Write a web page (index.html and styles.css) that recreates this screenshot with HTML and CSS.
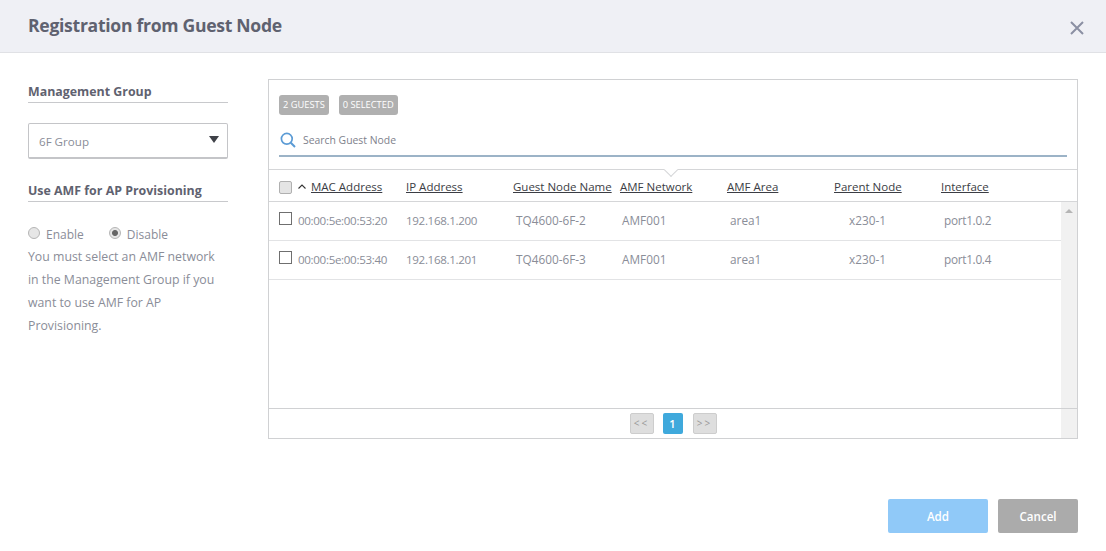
FILE: index.html
```html
<!DOCTYPE html>
<html lang="en">
<head>
    <meta charset="UTF-8">
    <title>Registration from Guest Node</title>
    <link rel="stylesheet" href="styles.css">
</head>
<body>

<div class="modal-header">
    <div class="modal-title">Registration from Guest Node</div>
    <svg class="close-icon" width="14" height="14" viewBox="0 0 14 14"><path d="M1 1L13 13M13 1L1 13" stroke="#8b90a3" stroke-width="2" fill="none"/></svg>
</div>

<div class="modal-body">
    <div class="side">
        <div class="side-heading">Management Group</div>
        <div class="select-box">
            <span>6F Group</span>
            <span class="select-arrow"></span>
        </div>
        <div class="side-heading side-heading-amf">Use AMF for AP Provisioning</div>
        <div class="radio-row">
            <span class="radio"></span><span class="radio-label">Enable</span>
            <span class="radio radio-on"></span><span class="radio-label">Disable</span>
        </div>
        <div class="side-note">You must select an AMF network in the Management Group if you want to use AMF for AP Provisioning.</div>
    </div>

    <div class="panel">
        <div class="panel-top">
            <div class="badges">
                <span class="badge">2 GUESTS</span>
                <span class="badge">0 SELECTED</span>
            </div>
            <div class="search">
                <svg width="16" height="16" viewBox="0 0 16 16"><circle cx="6.8" cy="6.8" r="5.4" stroke="#5b9bd5" stroke-width="1.7" fill="none"/><path d="M10.8 10.8L15 15" stroke="#5b9bd5" stroke-width="2" fill="none"/></svg>
                <span>Search Guest Node</span>
            </div>
        </div>

        <div class="table-head">
            <span class="notch"></span>
            <div class="cell-check"><span class="check check-all"></span></div>
            <div class="col-mac"><svg class="caret" width="8" height="5" viewBox="0 0 8 5"><path d="M0.5 4.5L4 1L7.5 4.5" stroke="#333" stroke-width="1.1" fill="none"/></svg><u>MAC Address</u></div>
            <div class="col"><u>IP Address</u></div>
            <div class="col"><u>Guest Node Name</u></div>
            <div class="col"><u>AMF Network</u></div>
            <div class="col"><u>AMF Area</u></div>
            <div class="col"><u>Parent Node</u></div>
            <div class="col"><u>Interface</u></div>
        </div>

        <div class="table-wrap">
            <div class="rows">
                <div class="row">
                    <div class="cell-check"><span class="check"></span></div>
                    <div class="cell-addr">00:00:5e:00:53:20</div>
                    <div class="cell-addr">192.168.1.200</div>
                    <div class="cell">TQ4600-6F-2</div>
                    <div class="cell">AMF001</div>
                    <div class="cell">area1</div>
                    <div class="cell cell-parent">x230-1</div>
                    <div class="cell cell-port">port1.0.2</div>
                </div>
                <div class="row">
                    <div class="cell-check"><span class="check"></span></div>
                    <div class="cell-addr">00:00:5e:00:53:40</div>
                    <div class="cell-addr">192.168.1.201</div>
                    <div class="cell">TQ4600-6F-3</div>
                    <div class="cell">AMF001</div>
                    <div class="cell">area1</div>
                    <div class="cell cell-parent">x230-1</div>
                    <div class="cell cell-port">port1.0.4</div>
                </div>
            </div>
            <div class="scroll-track"><span class="scroll-up"></span></div>
        </div>

        <div class="pager-wrap">
            <div class="pager">
                <span class="page-btn">&lt;&lt;</span>
                <span class="page-num">1</span>
                <span class="page-btn">&gt;&gt;</span>
            </div>
            <div class="scroll-track"></div>
        </div>
    </div>
</div>

<div class="modal-footer">
    <button class="btn btn-add">Add</button>
    <button class="btn btn-cancel">Cancel</button>
</div>

</body>
</html>
```

FILE: styles.css
```css
body {
    font-family: "Open Sans", Arial, sans-serif;
    background-color: #fff;
    margin: 0;
    padding: 0;
    color: #8a8d98;
    font-size: 12px;
}

.modal-header {
    height: 52px;
    background-color: #eff0f5;
    border-bottom: 1px solid #e0e1e5;
    display: flex;
    justify-content: space-between;
    align-items: center;
    padding: 0 22px 0 28px;
}

.modal-title {
    font-size: 17.6px;
    font-weight: 700;
    letter-spacing: -0.3px;
    color: #5f6270;
    position: relative;
    top: -1px;
}

.close-icon {
    position: relative;
    top: 2px;
}

.modal-body {
    display: flex;
    padding: 26px 28px 0 28px;
    gap: 40px;
}

/* Left column */
.side {
    width: 200px;
    flex-shrink: 0;
}

.side-heading {
    font-size: 12.4px;
    font-weight: 700;
    color: #5f6270;
    height: 23px;
    line-height: 26px;
    border-bottom: 1px solid #c8c9cc;
}

.side-heading-amf {
    margin-top: 19px;
}

.select-box {
    margin-top: 20px;
    height: 33px;
    box-sizing: content-box;
    border: 1px solid #c4c5c8;
    border-bottom: 2px solid #c4c5c8;
    border-radius: 2px;
    display: flex;
    justify-content: space-between;
    align-items: center;
    padding: 0 8px 0 10px;
    color: #8a8d98;
    font-size: 11.6px;
}

.select-box span:first-child {
    position: relative;
    top: 1px;
}

.select-arrow {
    width: 0;
    height: 0;
    border-left: 5.5px solid transparent;
    border-right: 5.5px solid transparent;
    border-top: 7px solid #3f4148;
    position: relative;
    top: -1px;
}

.radio-row {
    display: flex;
    align-items: center;
    margin-top: 22px;
    height: 21px;
}

.radio {
    width: 10px;
    height: 10px;
    border-radius: 50%;
    border: 1px solid #b5b5b5;
    background-color: #e6e6e6;
    position: relative;
    top: -2px;
}

.radio-on {
    background: radial-gradient(circle, #666 0, #666 2.5px, #e6e6e6 3.5px);
}

.radio-label {
    margin-left: 6px;
    margin-right: 25px;
}

.side-note {
    font-size: 12.3px;
    line-height: 23px;
}

/* Right panel */
.panel {
    width: 808px;
    height: 358px;
    border: 1px solid #d0d1d3;
    display: flex;
    flex-direction: column;
}

.panel-top {
    height: 90px;
    padding: 15px 10px 0 10px;
    box-sizing: border-box;
    border-bottom: 1px solid #d5d6d8;
}

.badges {
    display: flex;
    gap: 10px;
}

.badge {
    background-color: #b0b0b0;
    color: #fff;
    font-size: 9.3px;
    height: 20px;
    line-height: 20px;
    padding: 0 4px;
    border-radius: 3px;
}

.search {
    display: flex;
    align-items: center;
    gap: 7px;
    margin-top: 9px;
    height: 33px;
    box-sizing: border-box;
    padding: 0 0 0 1px;
    border-bottom: 2px solid #9cb3c7;
    font-size: 10.4px;
    color: #7e818c;
}

.table-head {
    display: grid;
    grid-template-columns: 29px 108px repeat(6, 107px) 1fr;
    height: 31px;
    box-sizing: content-box;
    align-items: center;
    border-bottom: 1px solid #d5d6d8;
    color: #3b3d44;
    font-size: 11.5px;
    position: relative;
}

.table-head .col,
.table-head .col-mac {
    position: relative;
    top: 1px;
}

.notch {
    position: absolute;
    left: 397px;
    top: -5px;
    width: 9px;
    height: 9px;
    background-color: #fff;
    border-right: 1px solid #d5d6d8;
    border-bottom: 1px solid #d5d6d8;
    transform: rotate(45deg);
}

.cell-check {
    padding-left: 10px;
    display: flex;
    align-items: center;
}

.col-mac {
    white-space: nowrap;
    display: flex;
    align-items: center;
    width: 137px;
}

.col-mac u {
    margin-left: 5px;
}

.col {
    white-space: nowrap;
}

.check {
    width: 11px;
    height: 11px;
    border: 1px solid #6f6f6f;
    display: block;
    background-color: #fff;
    position: relative;
    top: -2px;
}

.check-all {
    border: 1px solid #b0b0b0;
    background-color: #e4e4e4;
    border-radius: 2px;
    top: 2px;
}

.table-wrap {
    display: flex;
    flex: 1;
    min-height: 0;
}

.rows {
    flex: 1;
}

.row {
    display: grid;
    grid-template-columns: 29px 108px 110px 106px 108px 107px 107px 1fr;
    box-sizing: border-box;
    padding-bottom: 2px;
    height: 39px;
    align-items: center;
    border-bottom: 1px solid #e2e3e5;
}

.cell-addr, .cell {
    white-space: nowrap;
    font-size: 11.8px;
}

.cell-addr {
    font-size: 11.6px;
    letter-spacing: -0.33px;
}

.cell-parent {
    padding-left: 12px;
}

.cell-port {
    letter-spacing: -0.3px;
}

.scroll-track {
    width: 16px;
    flex-shrink: 0;
    background-color: #f1f1f1;
    position: relative;
}

.scroll-up {
    position: absolute;
    left: 4px;
    top: 7px;
    width: 0;
    height: 0;
    border-left: 4px solid transparent;
    border-right: 4px solid transparent;
    border-bottom: 4px solid #b5b5b5;
}

.pager-wrap {
    display: flex;
    height: 29px;
    border-top: 1px solid #d0d1d3;
}

.pager {
    flex: 1;
    display: flex;
    justify-content: center;
    align-items: center;
    gap: 9px;
    padding-left: 16px;
}

.page-btn {
    width: 22px;
    height: 19px;
    line-height: 19px;
    text-align: center;
    background-color: #dedede;
    border: 1px solid #cdcdcd;
    border-radius: 2px;
    font-size: 10px;
    letter-spacing: 2px;
    color: #999;
}

.page-num {
    width: 20px;
    height: 21px;
    line-height: 21px;
    margin-right: 1px;
    text-align: center;
    background-color: #3fa9dc;
    border-radius: 2px;
    color: #fff;
    font-size: 11px;
    font-weight: 600;
}

.modal-footer {
    display: flex;
    justify-content: flex-end;
    gap: 10px;
    padding: 60px 28px 0 0;
}

.btn {
    height: 34px;
    border: none;
    border-radius: 2px;
    color: #fff;
    font-family: "Open Sans", Arial, sans-serif;
    font-size: 11.6px;
    font-weight: 600;
}

.btn-add {
    width: 100px;
    background-color: #90c9f8;
}

.btn-cancel {
    width: 80px;
    background-color: #ababab;
}
```
